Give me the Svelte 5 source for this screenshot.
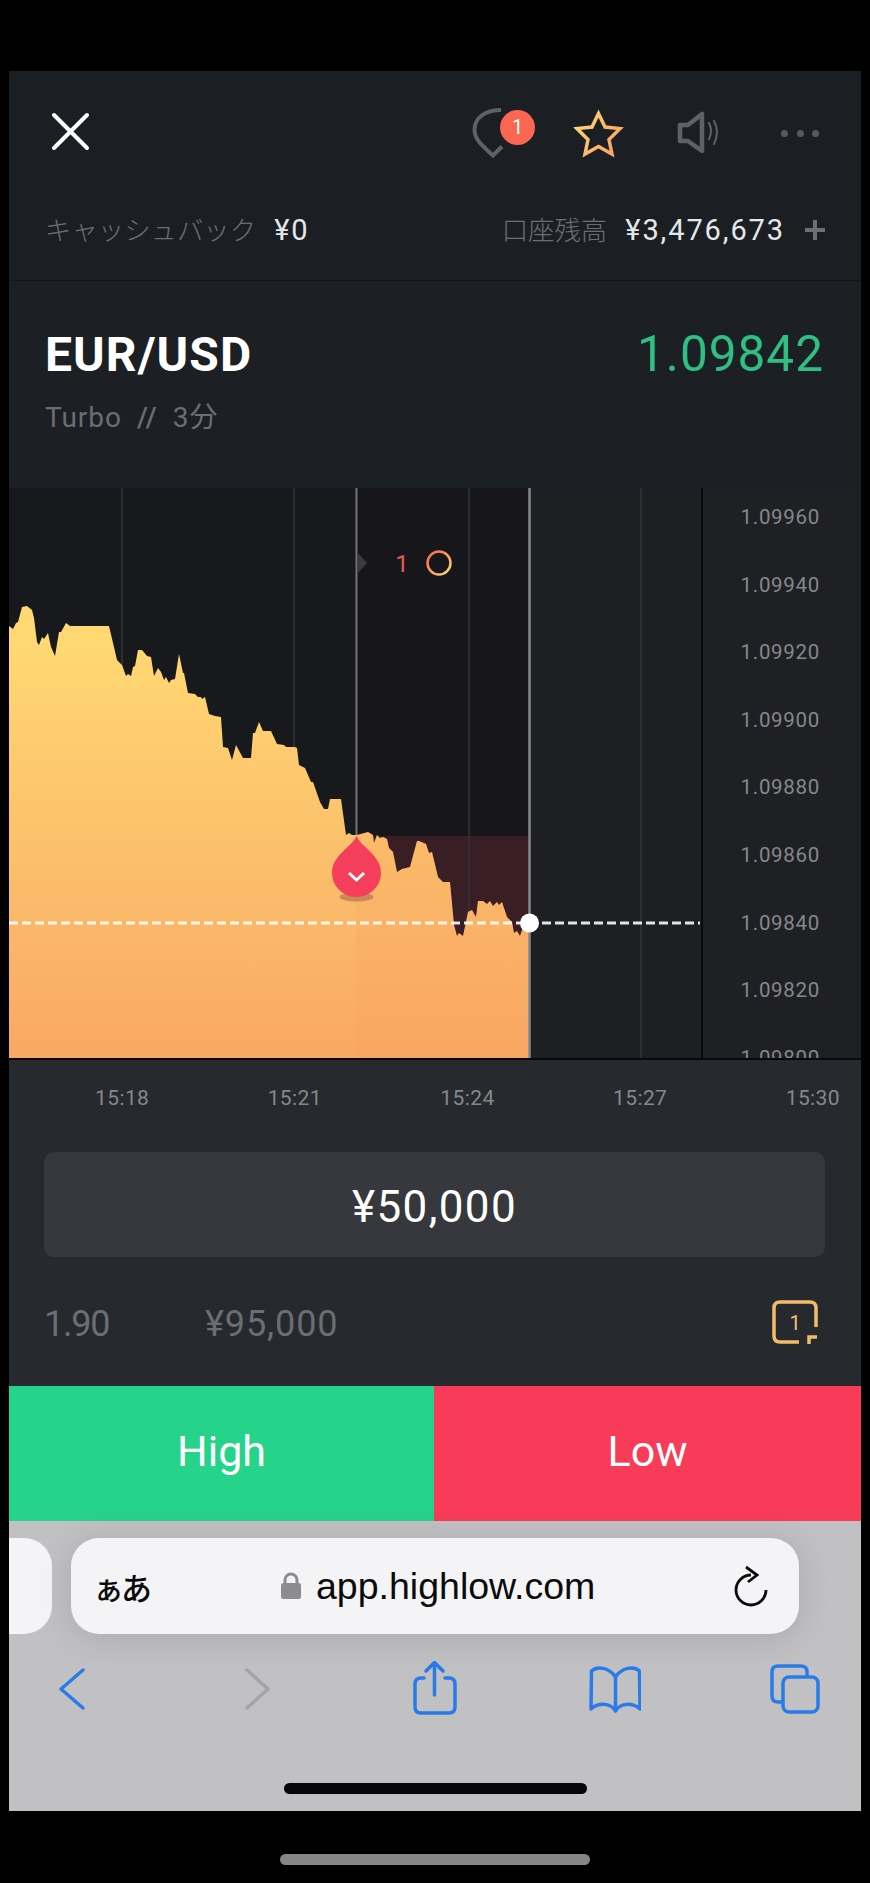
<script>
  // chart outline, page coordinates (the svg viewBox starts at the chart corner)
  const line = '9,626 13,629 16,623 18,622 22,607 27,606 32,610 34,618 37,642 39,645 42,637 44,639 48,633 51,647 55,656 59,632 61,632 66,623 70,626 109,626 113,643 117,660 122,665 126,676 128,674 131,676 133,667 135,666 138,650 142,650 147,656 151,657 154,676 158,668 161,672 164,680 166,677 169,683 171,680 175,679 179,654 183,673 184,673 188,693 195,694 198,697 201,697 202,699 205,697 209,714 215,716 221,717 223,747 228,748 232,760 236,745 243,758 251,758 253,733 255,733 259,722 263,731 271,731 277,744 284,745 286,747 295,747 297,748 299,765 305,768 311,782 313,782 320,802 324,809 328,809 330,799 341,799 346,835 349,833 352,835 357,835 368,832 373,835 374,843 377,835 380,838 383,837 387,839 389,848 393,852 397,872 402,869 410,867 417,841 419,841 426,844 429,853 432,852 438,877 443,882 450,882 454,925 457,936 459,933 463,936 468,912 472,910 476,917 478,901 483,901 487,904 490,901 493,906 497,902 499,905 502,902 507,917 512,922 514,933 517,931 520,936 523,927 528,922 529.5,922';
  const area = `M${line.split(' ').join(' L')} L529.5,1058 L9,1058 Z`;
  const grid = [122, 294, 469, 641];
  const prices = ['1.09960', '1.09940', '1.09920', '1.09900', '1.09880', '1.09860', '1.09840', '1.09820', '1.09800'];
  const times = ['15:18', '15:21', '15:24', '15:27', '15:30'];
</script>

<div class="screen">
  <header class="topbar">
    <svg class="close" viewBox="50 112 42 42"><path d="M54 116 L87 149 M87 116 L54 149" /></svg>
    <div class="actions">
      <div class="bubble">
        <svg viewBox="470 106 40 54"><path d="M501 110 C485 110 474.5 118 474.5 130 C474.5 140 484 147 493 155.5 L502 146.5" /></svg>
        <span class="badge">1</span>
      </div>
      <svg class="star" viewBox="570 108 58 52">
        <defs>
          <linearGradient id="gold" x1="0" y1="0" x2="1" y2="0.6">
            <stop offset="0" stop-color="#ffd873" />
            <stop offset="1" stop-color="#f9a864" />
          </linearGradient>
        </defs>
        <path d="M598.5 113.5 L605 127 L620 128.5 L609 139.5 L612 154 L598.5 146.5 L585 154 L588 139.5 L577 128.5 L592 127 Z" />
      </svg>
      <svg class="speaker" viewBox="676 110 46 46">
        <path class="cone" d="M680 125 L688 125 L702 114 L702 151 L688 141 L680 141 Z" />
        <path class="wave" d="M709 123 Q713 131 709 139 M714 121 Q720 132 714 144" />
      </svg>
      <div class="dots"><i></i><i></i><i></i></div>
    </div>
  </header>

  <div class="account">
    <div class="stat">
      <span class="label">キャッシュバック</span>
      <span class="value">¥0</span>
    </div>
    <div class="stat">
      <span class="label">口座残高</span>
      <span class="value">¥3,476,673</span>
      <span class="plus"></span>
    </div>
  </div>

  <section class="instrument">
    <div class="title-row">
      <h1>EUR/USD</h1>
      <span class="rate">1.09842</span>
    </div>
    <p class="sub">Turbo<em>//</em>3分</p>
  </section>

  <section class="chart">
    <svg class="plot" viewBox="9 488 692 570">
      <defs>
        <linearGradient id="fill" gradientUnits="userSpaceOnUse" x1="0" y1="640" x2="0" y2="1058">
          <stop offset="0" stop-color="#ffd873" />
          <stop offset="1" stop-color="#f9a864" />
        </linearGradient>
        <linearGradient id="ring" x1="0" y1="0" x2="1" y2="1">
          <stop offset="0" stop-color="#f0664e" />
          <stop offset="1" stop-color="#ffd873" />
        </linearGradient>
        <clipPath id="area-clip"><path d={area} /></clipPath>
      </defs>

      <rect x="9" y="488" width="521" height="570" fill="#18191d" />
      <rect x="530" y="488" width="171" height="570" fill="#1e1f23" />
      <rect x="356" y="488" width="174" height="348" fill="#17171b" />
      <rect x="356" y="836" width="174" height="100" fill="#3a1e26" />

      {#each grid as x}
        <line x1={x} y1="488" x2={x} y2="1058" stroke="#333539" stroke-width="1.5" />
      {/each}
      <line x1="356.5" y1="488" x2="356.5" y2="840" stroke="#74767a" stroke-width="2" />
      <path d="M357 552 L367 563 L357 574 Z" fill="#3a3c40" />
      <text class="strike" x="402" y="572">1</text>
      <circle cx="439" cy="563" r="11.5" fill="none" stroke="url(#ring)" stroke-width="2.5" />

      <path d={area} fill="url(#fill)" />
      <rect x="356" y="820" width="174" height="238" fill="#f9a060" opacity="0.2" clip-path="url(#area-clip)" />

      <line x1="529.5" y1="488" x2="529.5" y2="1058" stroke="#85878a" stroke-width="2.5" />
      <line x1="9" y1="923" x2="700" y2="923" stroke="#fff" stroke-opacity="0.88" stroke-width="3" stroke-dasharray="9 4" />
      <circle cx="529.5" cy="923" r="9.5" fill="#fff" />

      <ellipse cx="356.5" cy="897" rx="17" ry="4.5" fill="#c98a58" />
      <path d="M356.5 836 C361 847 381 855 381 873 A24.5 24 0 0 1 332 873 C332 855 352 847 356.5 836 Z" fill="#f43e5c" />
      <path d="M349 873 L356.5 880 L364 873" fill="none" stroke="#fff" stroke-width="3" />
    </svg>
    <div class="axis">
      {#each prices as price}
        <span>{price}</span>
      {/each}
    </div>
  </section>

  <section class="panel">
    <div class="times">
      {#each times as t}
        <span>{t}</span>
      {/each}
    </div>
    <div class="amount">¥50,000</div>
    <div class="payout">
      <span class="ratio">1.90</span>
      <span class="return">¥95,000</span>
      <div class="one-click">
        <svg viewBox="770 1298 50 48">
          <path d="M799 1342 L780 1342 Q774 1342 774 1336 L774 1308 Q774 1302 780 1302 L810 1302 Q816 1302 816 1308 L816 1327" />
          <path d="M809 1344 L809 1337 L817 1337" />
        </svg>
        <span>1</span>
      </div>
    </div>
  </section>

  <div class="trade">
    <button class="high">High</button>
    <button class="low">Low</button>
  </div>

  <footer class="browser">
    <div class="url-row">
      <div class="prev-tab"></div>
      <div class="url">
        <span class="aa">ぁあ</span>
        <div class="address">
          <svg viewBox="0 0 20 28"><path class="shackle" d="M4 13 V8 A6 6 0 0 1 16 8 V13" /><rect y="11" width="20" height="16" rx="2.5" /></svg>
          <span>app.highlow.com</span>
        </div>
        <svg class="reload" viewBox="731 1562 40 46">
          <path d="M751 1575 A15 15 0 1 0 766 1590 M746 1567 L757 1575 L748 1582" />
        </svg>
      </div>
    </div>
    <nav class="toolbar">
      <svg viewBox="46 1660 52 56"><path d="M83 1670 L61 1689 L83 1708" /></svg>
      <svg class="off" viewBox="227 1660 52 56"><path d="M247 1670 L268 1689 L247 1708" /></svg>
      <svg viewBox="408 1660 52 56"><path d="M424 1678 H421 Q415 1678 415 1684 V1707 Q415 1713 421 1713 H449 Q455 1713 455 1707 V1684 Q455 1678 449 1678 H445 M434.5 1695 V1663 M426 1671 L434.5 1662.5 L443 1671" /></svg>
      <svg viewBox="589 1660 52 56"><path d="M615.5 1677 C609 1667 597 1666 591.5 1671 L591 1709 C598 1703 610 1702 615.5 1711 C621 1702 633 1703 640 1709 L639.5 1671 C634 1666 622 1667 615.5 1677 V1708" /></svg>
      <svg viewBox="770 1660 52 56"><path d="M807 1676 V1672 Q807 1666 801 1666 H778 Q772 1666 772 1672 V1696 Q772 1702 778 1702 H782" /><rect x="783" y="1677" width="35" height="35" rx="6" /></svg>
    </nav>
    <div class="home-bar"></div>
  </footer>
</div>
<div class="device-bar"></div>

<style>
  :global(body) {
    background: #000;
  }

  svg {
    display: block;
    fill: none;
  }

  .screen {
    margin: 0 9px;
    padding-top: 71px;
    font-family: Roboto, "Noto Sans CJK JP", sans-serif;
  }

  .topbar {
    height: 118px;
    background: #1b1f23;
    display: flex;
    justify-content: space-between;
    padding: 40px 42px 0 41px;
    box-sizing: border-box;
  }

  .close {
    width: 42px;
    height: 42px;
    stroke: #fff;
    stroke-width: 4;
    stroke-linecap: round;
  }

  .actions {
    display: flex;
    height: 54px;
    margin-top: -5px;
  }

  .bubble {
    position: relative;
    width: 40px;
    height: 54px;
    margin-right: 60px;
    stroke: #5f6265;
    stroke-width: 4;
  }

  .badge {
    position: absolute;
    left: 30px;
    top: 4px;
    width: 35px;
    height: 35px;
    border-radius: 50%;
    background: #fa6650;
    color: #fff;
    font-size: 20px;
    line-height: 35px;
    text-align: center;
  }

  .star {
    width: 58px;
    height: 52px;
    margin-top: 2px;
    margin-right: 48px;
    stroke: url(#gold);
    stroke-width: 3.5;
  }

  .speaker {
    width: 46px;
    height: 46px;
    margin-top: 4px;
    margin-right: 59px;
    stroke: #5f6265;
  }

  .cone {
    stroke-width: 4.5;
    stroke-linejoin: round;
  }

  .wave {
    stroke-width: 2;
    stroke-linecap: round;
  }

  .dots {
    display: flex;
    gap: 8.5px;
    padding-top: 24px;
  }

  .dots i {
    width: 7px;
    height: 7px;
    border-radius: 50%;
    background: #56595c;
  }

  .account {
    background: #1b1f23;
    border-bottom: 1px solid #131619;
    display: flex;
    justify-content: space-between;
    padding: 0 36px 9px;
    height: 82px;
    align-items: center;
  }

  .stat {
    display: flex;
    align-items: center;
  }

  .label {
    font-size: 26.4px;
    color: #6b6e72;
    font-weight: 300;
    margin-bottom: 4px;
  }

  .value {
    font-size: 29px;
    letter-spacing: 1.9px;
    color: #e6e7e8;
    margin-left: 18px;
  }

  .plus {
    width: 20px;
    height: 20px;
    margin-left: 20px;
    background:
      linear-gradient(#6d7073, #6d7073) center / 100% 4px no-repeat,
      linear-gradient(#6d7073, #6d7073) center / 4px 100% no-repeat;
  }

  .instrument {
    height: 207px;
    box-sizing: border-box;
    padding: 48px 37px 0 36px;
    background: #1c2024;
  }

  .title-row {
    display: flex;
    justify-content: space-between;
    align-items: center;
    height: 50px;
  }

  h1 {
    margin: 1px 0 0;
    font-size: 48px;
    letter-spacing: 1.1px;
    font-weight: 700;
    color: #fff;
  }

  .rate {
    font-size: 49.5px;
    letter-spacing: 1px;
    color: #30bf83;
  }

  .sub {
    margin: 21px 0 0;
    font-size: 28px;
    letter-spacing: 1px;
    line-height: 36px;
    color: #6b6e72;
  }

  .sub em {
    margin: 0 15px;
    font-style: normal;
    font-weight: 500;
  }

  .chart {
    display: flex;
    height: 570px;
    border-bottom: 2px solid #08090a;
    background: #1e2024;
    overflow: hidden;
  }

  .plot {
    width: 692px;
    height: 570px;
    flex: none;
  }

  .strike {
    font-size: 24px;
    fill: #e0604e;
    text-anchor: middle;
  }

  .axis {
    flex: 1;
    border-left: 2px solid #08090a;
    display: flex;
    flex-direction: column;
    gap: 42px;
    padding: 17px 41px 0 0;
    text-align: right;
    font-size: 20.5px;
    line-height: 25.6px;
    letter-spacing: 0.7px;
    color: #85888b;
  }

  .panel {
    background: #26292d;
    height: 326px;
    box-sizing: border-box;
    padding-top: 25px;
  }

  .times {
    display: flex;
    justify-content: space-between;
    padding: 0 21px 0 86px;
    font-size: 21px;
    line-height: 26px;
    letter-spacing: 0.4px;
    color: #85888b;
  }

  .amount {
    margin: 41px 36px 0 35px;
    height: 105px;
    border-radius: 10px;
    background: #36383d;
    color: #fff;
    font-size: 44px;
    letter-spacing: 1.4px;
    line-height: 111px;
    text-align: center;
  }

  .payout {
    display: flex;
    align-items: center;
    height: 129px;
    padding: 4px 41px 0 35px;
    box-sizing: border-box;
    font-size: 36px;
    color: #6b6e72;
  }

  .ratio {
    width: 161px;
    letter-spacing: -1.2px;
  }

  .return {
    letter-spacing: 0.9px;
  }

  .one-click {
    position: relative;
    margin-left: auto;
    margin-top: -3px;
    width: 50px;
    height: 48px;
    stroke-width: 3.5;
    color: #f7c46e;
    font-size: 20px;
    line-height: 50px;
    text-align: center;
  }

  .one-click svg {
    stroke: #f4bb69;
  }

  .one-click span {
    position: absolute;
    inset: 0;
  }

  .trade {
    display: flex;
    height: 135px;
  }

  .trade button {
    flex: 1;
    border: 0;
    padding: 0 0 6px;
    color: #fff;
    font-family: inherit;
    font-size: 43px;
  }

  .trade .high {
    flex: 0 0 425px;
    background: #26d38a;
  }

  .low {
    background: #f73b58;
  }

  .browser {
    height: 290px;
    background: #c1c1c3;
    padding-top: 17px;
    box-sizing: border-box;
    font-family: "Liberation Sans", "Noto Sans CJK JP", sans-serif;
  }

  .url-row {
    display: flex;
    gap: 19px;
  }

  .prev-tab {
    width: 43px;
    height: 96px;
    background: #f4f4f6;
    border-radius: 0 28px 28px 0;
  }

  .url {
    position: relative;
    width: 728px;
    height: 96px;
    border-radius: 28px;
    background: #f4f4f6;
    box-shadow: 0 4px 36px rgba(0, 0, 0, 0.12);
    color: #0b0b0c;
    display: flex;
    align-items: center;
  }

  .aa {
    width: 60px;
    margin-left: 22px;
    font-family: "Noto Sans CJK JP", sans-serif;
    font-size: 31px;
    font-weight: 500;
    letter-spacing: -3px;
    white-space: nowrap;
  }

  .address {
    display: flex;
    align-items: center;
    gap: 15px;
    margin-left: 128px;
    font-size: 37.5px;
  }

  .address svg {
    width: 20px;
    height: 28px;
    fill: #8c8c90;
  }

  .shackle {
    fill: none;
    stroke: #8c8c90;
    stroke-width: 3;
  }

  .reload {
    position: absolute;
    right: 28px;
    top: 24px;
    width: 40px;
    height: 46px;
    stroke: #0b0b0c;
    stroke-width: 2.8;
  }

  .toolbar {
    display: flex;
    justify-content: space-between;
    margin-top: 26px;
    padding: 0 39px 0 37px;
    stroke: #2a7bea;
    stroke-width: 3.5;
    stroke-linejoin: round;
    stroke-linecap: round;
  }

  .toolbar svg {
    width: 52px;
    height: 56px;
  }

  .toolbar .off {
    stroke: #a4a4a6;
  }

  .home-bar {
    width: 303px;
    height: 11px;
    margin: 67px auto 0;
    border-radius: 6px;
    background: #060608;
  }

  .device-bar {
    width: 310px;
    height: 11px;
    margin: 43px auto 18px;
    border-radius: 6px;
    background: #868686;
  }
</style>
